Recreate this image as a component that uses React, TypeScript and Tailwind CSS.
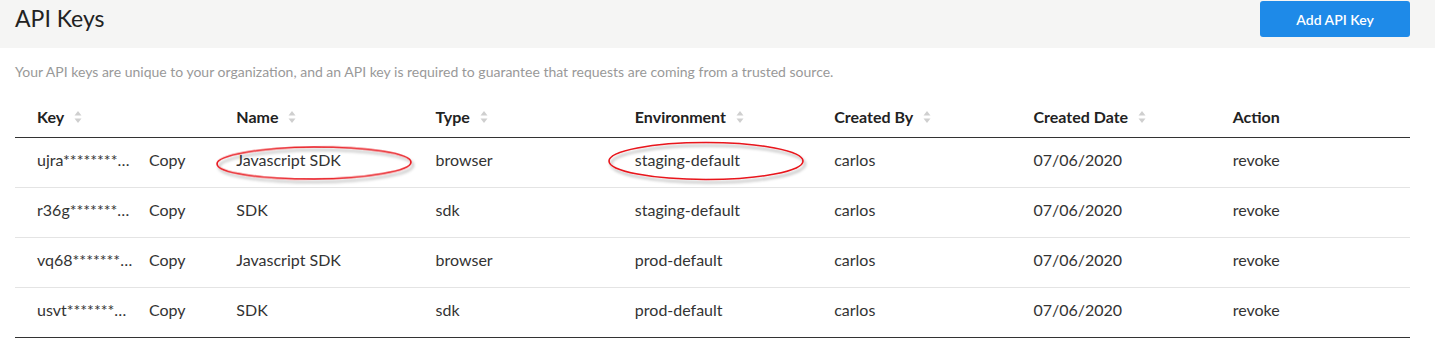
import React from 'react';

const rows = [
  { key: 'ujra********…', name: 'Javascript SDK', type: 'browser', env: 'staging-default' },
  { key: 'r36g*******…', name: 'SDK', type: 'sdk', env: 'staging-default' },
  { key: 'vq68*******…', name: 'Javascript SDK', type: 'browser', env: 'prod-default' },
  { key: 'usvt*******…', name: 'SDK', type: 'sdk', env: 'prod-default' },
];

const columns = [
  { label: 'Key', sort: true },
  { label: 'Name', sort: true },
  { label: 'Type', sort: true },
  { label: 'Environment', sort: true },
  { label: 'Created By', sort: true },
  { label: 'Created Date', sort: true },
  { label: 'Action', sort: false },
];

function SortIcon() {
  return (
    <svg width="8" height="14" viewBox="0 0 8 14" className="ml-[10px]">
      <path d="M4 1 L7.5 5.5 H0.5 Z" fill="#cfcfcf" />
      <path d="M4 13 L7.5 8.5 H0.5 Z" fill="#cfcfcf" />
    </svg>
  );
}

export default function App() {
  return (
    <div
      className="relative w-[1435px] h-[352px] bg-white text-[#333]"
      style={{ fontFamily: 'Lato, "Open Sans", sans-serif' }}
    >
      {/* header band */}
      <div className="flex items-start justify-between h-[48px] bg-[#f5f5f4] pl-[15px] pr-[25px]">
        <h1 className="text-[23px] leading-[36px] text-[#222]">API Keys</h1>
        <button className="mt-[1px] w-[150px] h-[36px] rounded-[3px] bg-[#1e8ae8] text-white text-[14px] font-semibold">
          Add API Key
        </button>
      </div>

      <p className="px-[15px] mt-[15px] text-[14px] leading-[18px] text-[#999]">
        Your API keys are unique to your organization, and an API key is required to guarantee that requests are coming from a trusted source.
      </p>

      <div className="mx-[15px] mt-[15px] w-[1395px]">
        <div className="grid grid-cols-7 h-[42px] items-center border-b border-[#333]">
          {columns.map((c) => (
            <div key={c.label} className="flex items-center pl-[22px] text-[16px] font-bold text-[#222]">
              {c.label}
              {c.sort && <SortIcon />}
            </div>
          ))}
        </div>
        {rows.map((r, i) => (
          <div
            key={r.key}
            className={
              'grid grid-cols-7 h-[50px] pb-[6px] items-center text-[16px] ' +
              (i === rows.length - 1 ? 'border-b border-[#333]' : 'border-b border-[#e4e4e4]')
            }
          >
            <div className="flex items-center pl-[22px]">
              <span className="w-[112px] whitespace-nowrap">{r.key}</span>
              <span>Copy</span>
            </div>
            <div className="pl-[22px]">{r.name}</div>
            <div className="pl-[22px]">{r.type}</div>
            <div className="pl-[22px]">{r.env}</div>
            <div className="pl-[22px]">carlos</div>
            <div className="pl-[22px]">07/06/2020</div>
            <div className="pl-[22px]">revoke</div>
          </div>
        ))}
      </div>

      {/* annotation ellipses */}
      <svg className="absolute left-0 top-0 pointer-events-none" width="1435" height="352">
        <defs>
          <filter id="sh" x="-10%" y="-30%" width="120%" height="160%">
            <feDropShadow dx="2" dy="3" stdDeviation="1.5" floodColor="#000" floodOpacity="0.35" />
          </filter>
        </defs>
        <ellipse cx="314" cy="163" rx="97" ry="16" fill="none" stroke="#e8141b" strokeWidth="1.6" filter="url(#sh)" transform="rotate(-0.5 314 163)" />
        <ellipse cx="706" cy="161" rx="97" ry="18.5" fill="none" stroke="#e8141b" strokeWidth="1.6" filter="url(#sh)" />
      </svg>
    </div>
  );
}
